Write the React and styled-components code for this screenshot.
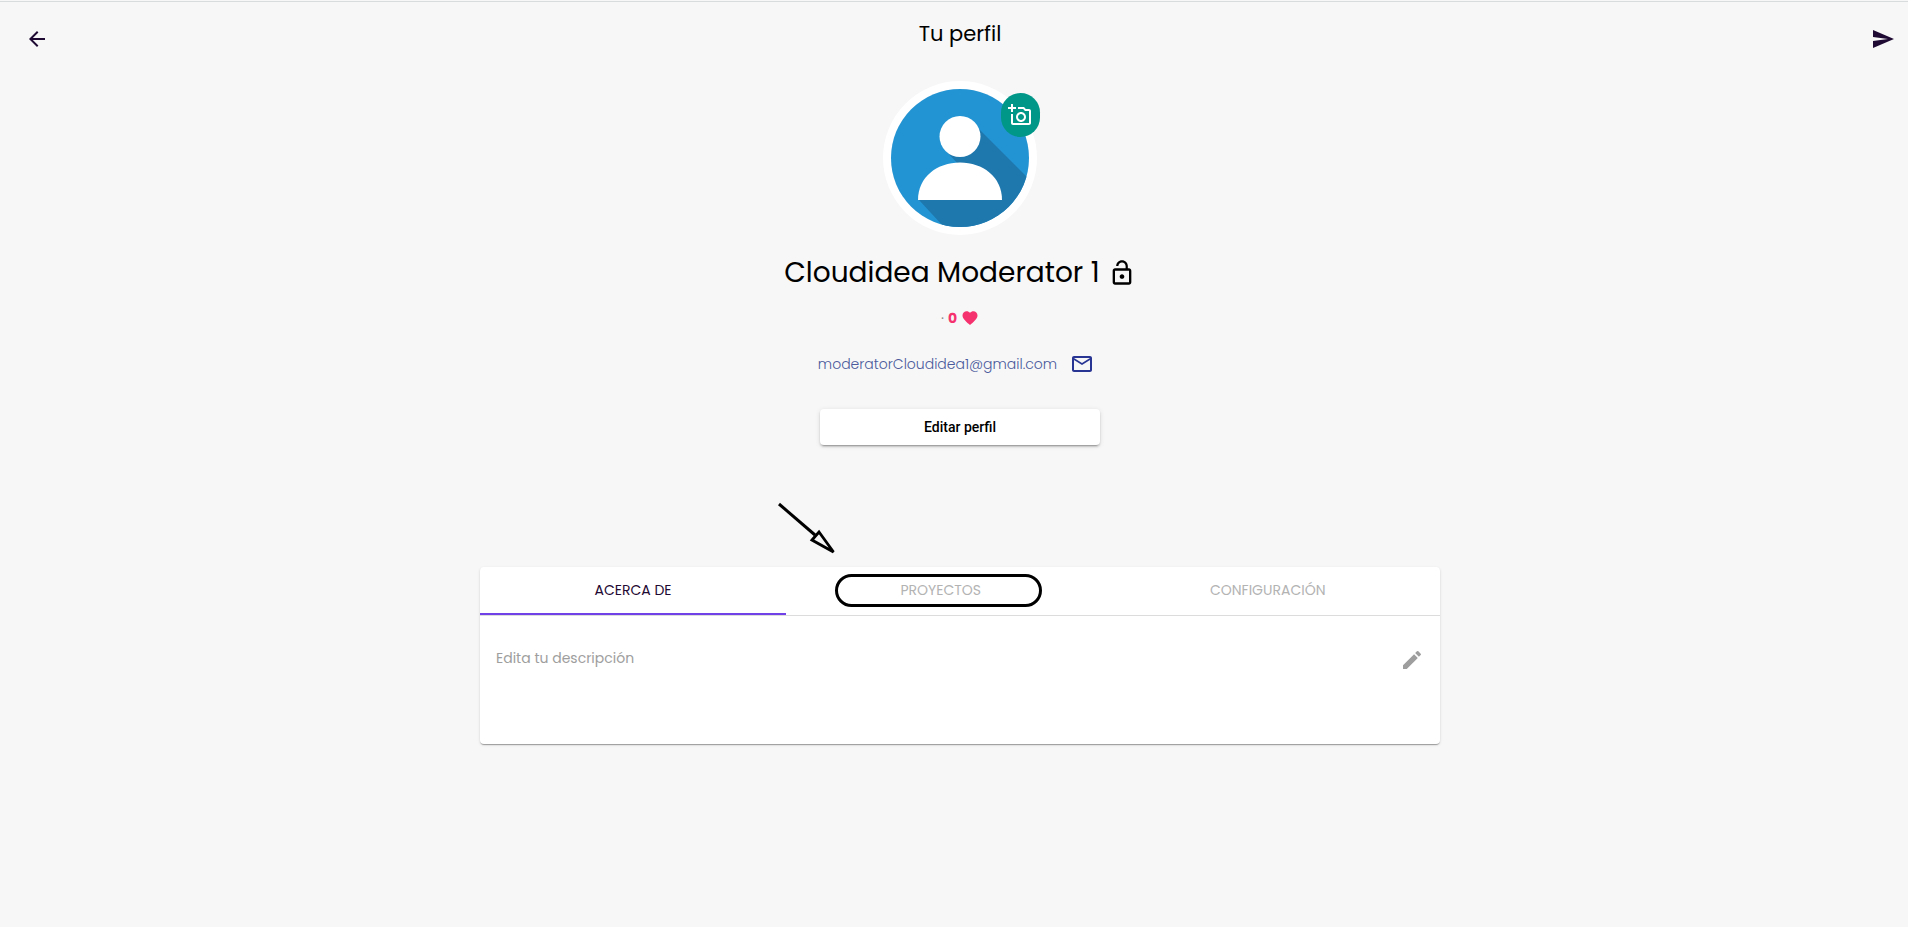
import React from "react";
import styled, { createGlobalStyle } from "styled-components";
import {
  MdArrowBack,
  MdSend,
  MdOutlineAddAPhoto,
  MdLockOpen,
  MdFavorite,
  MdMailOutline,
  MdEdit,
} from "react-icons/md";

const GlobalStyle = createGlobalStyle`
  * { box-sizing: border-box; }
  body {
    margin: 0;
    background: #f7f7f7;
    color: #000;
    font-family: Poppins, Inter, "Open Sans", sans-serif;
  }
`;

const Page = styled.div`
  padding-top: 1px;
  min-height: 100vh;
`;

const Header = styled.header`
  display: flex;
  justify-content: space-between;
  padding: 0 13px 0 25px;
  border-top: 1px solid #d9dcdc;
`;

const IconButton = styled.button`
  display: flex;
  align-items: center;
  justify-content: center;
  width: 24px;
  height: 24px;
  padding: 0;
  border: 0;
  background: none;
  color: ${(p) => p.$color || "#1f0a33"};
  font-size: 24px;
  cursor: pointer;
`;

const HeaderAction = styled(IconButton)`
  margin-top: 25px;
`;

const PageTitle = styled.h1`
  margin: 16px 0 0;
  font-size: 21px;
  line-height: 32px;
  font-weight: 400;
`;

const Main = styled.main`
  display: flex;
  flex-direction: column;
  align-items: center;
  padding: 30px 0 40px 12px;
`;

const AvatarFrame = styled.div`
  position: relative;
  width: 154px;
  height: 154px;
  border: 8px solid #fff;
  border-radius: 50%;
`;

const Avatar = styled.svg`
  display: block;
  width: 100%;
  height: 100%;
`;

const PhotoButton = styled.button`
  position: absolute;
  top: 4px;
  right: -11px;
  display: flex;
  align-items: center;
  justify-content: center;
  width: 39px;
  height: 44px;
  padding: 0 2px 0 0;
  border: 0;
  border-radius: 20px;
  background: #009688;
  color: #fff;
  font-size: 24px;
  cursor: pointer;

  path[fill="none"] {
    stroke: none;
  }
`;

const NameRow = styled.div`
  display: flex;
  align-items: center;
  gap: 8px;
  margin-top: 18px;
`;

const Name = styled.h2`
  margin: 0;
  font-size: 28px;
  line-height: 40px;
  font-weight: 400;
`;

const Likes = styled.p`
  display: flex;
  align-items: center;
  gap: 4px;
  margin: 15px 0 0;
  color: #f5326e;
  font-size: 14px;
  line-height: 20px;
`;

const Dot = styled.span`
  color: #8a8a8a;
`;

const EmailLink = styled.a`
  display: flex;
  align-items: center;
  gap: 13px;
  margin-top: 24px;
  padding-right: 8px;
  color: #4a5a9c;
  font-size: 14px;
  line-height: 24px;
  font-weight: 300;
  text-decoration: none;

  svg {
    color: #283593;
    font-size: 24px;
  }
`;

const EditButton = styled.button`
  width: 280px;
  height: 36px;
  margin-top: 33px;
  padding: 0 16px;
  border: 0;
  border-radius: 4px;
  background: #fff;
  box-shadow: 0 3px 1px -2px rgba(0, 0, 0, 0.2), 0 2px 2px 0 rgba(0, 0, 0, 0.14),
    0 1px 5px 0 rgba(0, 0, 0, 0.12);
  color: #000;
  font: 500 14px/36px Roboto, sans-serif;
  cursor: pointer;
`;

const Card = styled.section`
  position: relative;
  width: 960px;
  max-width: 100%;
  margin-top: 122px;
  border-radius: 4px;
  background: #fff;
  box-shadow: 0 2px 1px -1px rgba(0, 0, 0, 0.2), 0 1px 1px 0 rgba(0, 0, 0, 0.14),
    0 1px 3px 0 rgba(0, 0, 0, 0.12);
`;

const Tabs = styled.div`
  display: flex;
  height: 49px;
  border-bottom: 1px solid #dcdcdc;
`;

const Tab = styled.button`
  flex: 1 0 auto;
  padding: 0 24px;
  border: 0;
  border-bottom: 2px solid ${(p) => (p.$active ? "#7041e6" : "transparent")};
  background: none;
  color: ${(p) => (p.$active ? "#1f0a33" : "#b3b3b3")};
  font-family: inherit;
  font-size: 14px;
  font-weight: 400;
  text-transform: uppercase;
  cursor: pointer;
`;

const Panel = styled.div`
  display: flex;
  justify-content: space-between;
  align-items: flex-start;
  min-height: 128px;
  padding: 32px 16px;
`;

const Description = styled.p`
  margin: 0;
  color: #9e9e9e;
  font-size: 14px;
  line-height: 20px;
`;

const Highlight = styled.div`
  position: absolute;
  top: 7px;
  left: 355px;
  width: 207px;
  height: 33px;
  border: 3px solid #000;
  border-radius: 17px;
  pointer-events: none;
`;

const Arrow = styled.svg`
  position: absolute;
  top: -65px;
  left: 297px;
  pointer-events: none;
`;

export default function App() {
  return (
    <>
      <GlobalStyle />
      <Page>
        <Header>
          <HeaderAction aria-label="Volver">
            <MdArrowBack />
          </HeaderAction>
          <PageTitle>Tu perfil</PageTitle>
          <HeaderAction aria-label="Enviar">
            <MdSend />
          </HeaderAction>
        </Header>
        <Main>
          <AvatarFrame>
            <Avatar viewBox="0 0 138 138" aria-hidden="true">
              <defs>
                <clipPath id="disc">
                  <circle cx="69" cy="69" r="69" />
                </clipPath>
              </defs>
              <g clipPath="url(#disc)">
                <rect width="138" height="138" fill="#2394d3" />
                <path d="M55 62L83 36L89 41L150 102V150H64L28 111L100 111V90L68 76Z" fill="#1e77ad" />
              </g>
              <circle cx="69" cy="47.500" r="20.500" fill="#fff" />
              <path d="M27 111C27 88 46 73.500 69 73.500S111 88 111 111Z" fill="#fff" />
            </Avatar>
            <PhotoButton aria-label="Cambiar foto">
              <MdOutlineAddAPhoto />
            </PhotoButton>
          </AvatarFrame>
          <NameRow>
            <Name>Cloudidea Moderator 1</Name>
            <MdLockOpen size={28} />
          </NameRow>
          <Likes>
            <Dot>·</Dot>
            <strong>0</strong>
            <MdFavorite size={18} />
          </Likes>
          <EmailLink href="mailto:moderatorCloudidea1@gmail.com">
            moderatorCloudidea1@gmail.com
            <MdMailOutline />
          </EmailLink>
          <EditButton>Editar perfil</EditButton>
          <Card>
            <Tabs role="tablist">
              <Tab role="tab" aria-selected="true" $active>
                Acerca de
              </Tab>
              <Tab role="tab" aria-selected="false">
                Proyectos
              </Tab>
              <Tab role="tab" aria-selected="false">
                Configuración
              </Tab>
            </Tabs>
            <Panel role="tabpanel">
              <Description>Edita tu descripción</Description>
              <IconButton $color="#9e9e9e" aria-label="Editar descripción">
                <MdEdit />
              </IconButton>
            </Panel>
            <Highlight />
            <Arrow width="62" height="56" viewBox="0 0 62 56" aria-hidden="true">
              <path d="M2 2L38 33" stroke="#000" strokeWidth="3" fill="none" />
              <path d="M35 38L42 30L56.500 50Z" stroke="#000" strokeWidth="2.800" fill="#f7f7f7" />
            </Arrow>
          </Card>
        </Main>
      </Page>
    </>
  );
}
